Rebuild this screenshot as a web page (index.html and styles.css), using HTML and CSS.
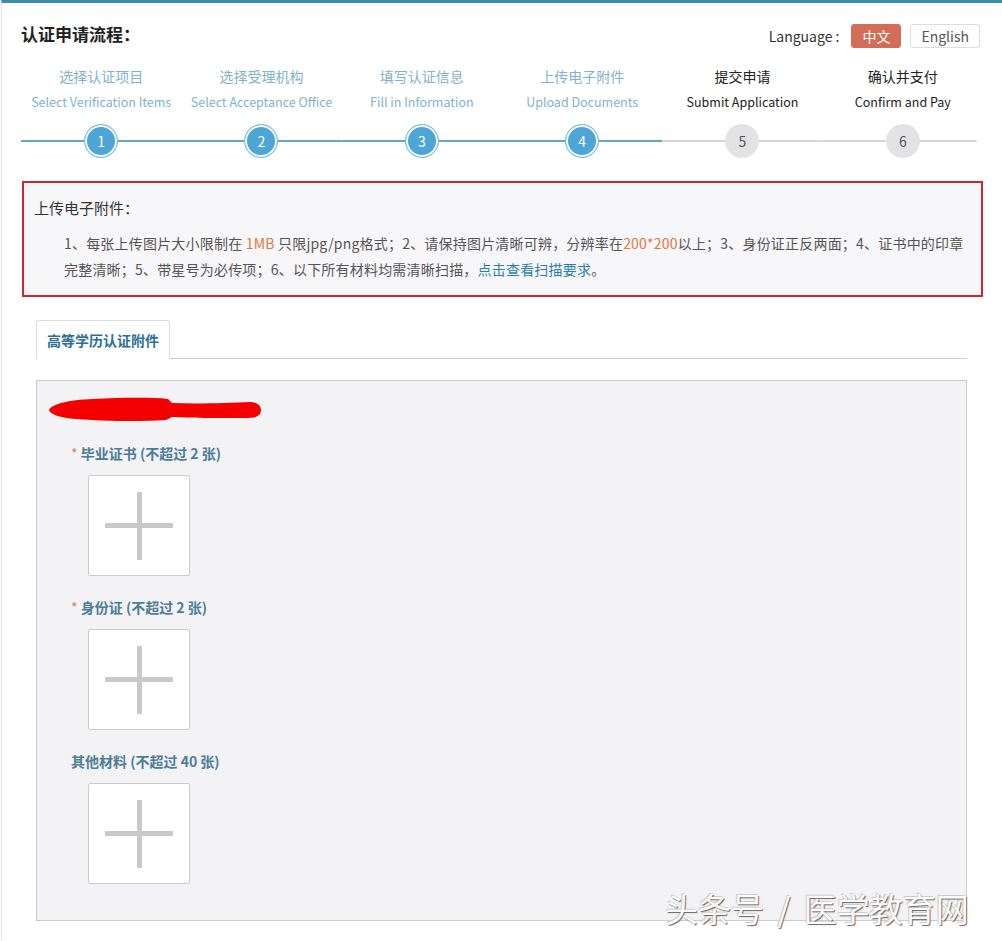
FILE: index.html
```html
<!DOCTYPE html>
<html lang="zh-CN">
<head>
    <meta charset="UTF-8">
    <title>认证申请流程</title>
    <link rel="stylesheet" href="styles.css">
</head>
<body>
<div class="page">
    <div class="header">
        <h1>认证申请流程：</h1>
        <div class="lang">
            <span class="lang-label">Language :</span>
            <span class="lang-btn active">中文</span>
            <span class="lang-btn">English</span>
        </div>
    </div>

    <div class="steps">
        <div class="step done">
            <div class="step-cn">选择认证项目</div>
            <div class="step-en">Select Verification Items</div>
            <div class="step-track"><span class="step-num">1</span></div>
        </div>
        <div class="step done">
            <div class="step-cn">选择受理机构</div>
            <div class="step-en">Select Acceptance Office</div>
            <div class="step-track"><span class="step-num">2</span></div>
        </div>
        <div class="step done">
            <div class="step-cn">填写认证信息</div>
            <div class="step-en">Fill in Information</div>
            <div class="step-track"><span class="step-num">3</span></div>
        </div>
        <div class="step done">
            <div class="step-cn">上传电子附件</div>
            <div class="step-en">Upload Documents</div>
            <div class="step-track"><span class="step-num">4</span></div>
        </div>
        <div class="step">
            <div class="step-cn">提交申请</div>
            <div class="step-en">Submit Application</div>
            <div class="step-track"><span class="step-num">5</span></div>
        </div>
        <div class="step">
            <div class="step-cn">确认并支付</div>
            <div class="step-en">Confirm and Pay</div>
            <div class="step-track"><span class="step-num">6</span></div>
        </div>
    </div>

    <div class="notice">
        <div class="notice-title">上传电子附件：</div>
        <p class="notice-text">1、每张上传图片大小限制在 <em>1MB</em> 只限jpg/png格式；2、请保持图片清晰可辨，分辨率在<em>200*200</em>以上；3、身份证正反两面；4、证书中的印章完整清晰；5、带星号为必传项；6、以下所有材料均需清晰扫描，<a href="#">点击查看扫描要求</a>。</p>
    </div>

    <div class="tabs">
        <div class="tab">高等学历认证附件</div>
    </div>

    <div class="panel">
        <svg class="scribble" width="214" height="26" viewBox="0 0 214 26">
            <path d="M1,13 C4,7 20,3 45,2 C70,1 100,0 120,2 L124,6 C150,7 180,6 203,5 C210,6 213,9 213,13 C213,18 209,21 200,21 C170,21 140,21 124,20 L118,23 C90,25 55,24 28,22 C12,21 2,17 1,13 Z" fill="#f40000"/>
        </svg>

        <div class="field">
            <div class="field-label"><span class="req">*</span> 毕业证书 (不超过 2 张)</div>
            <div class="upload"></div>
        </div>
        <div class="field">
            <div class="field-label"><span class="req">*</span> 身份证 (不超过 2 张)</div>
            <div class="upload"></div>
        </div>
        <div class="field">
            <div class="field-label">其他材料 (不超过 40 张)</div>
            <div class="upload"></div>
        </div>
    </div>

    <div class="watermark">头条号 / 医学教育网</div>
</div>
</body>
</html>
```

FILE: styles.css
```css
body {
    margin: 0;
    background-color: #fff;
    font-family: "Noto Sans CJK SC", "Noto Sans", sans-serif;
    color: #333;
}
.page {
    position: relative;
    margin-left: 1px;
    border-top: 3px solid #3a8ea8;
    border-left: 1px solid #e2e2e2;
    padding: 0 19px 19px 20px;
    min-height: 935px;
    box-sizing: border-box;
}
.header {
    display: flex;
    justify-content: space-between;
    align-items: center;
    padding-top: 20px;
    padding-right: 3px;
}
h1 {
    margin: 0 0 3px -1px;
    font-size: 17px;
    font-weight: bold;
    color: #222;
    line-height: 22px;
}
.lang {
    display: flex;
    align-items: center;
    font-size: 14px;
}
.lang-label {
    margin-right: 12px;
    color: #333;
}
.lang-btn {
    display: inline-block;
    height: 22px;
    line-height: 22px;
    padding: 0 10px;
    border: 1px solid #ddd;
    border-radius: 3px;
    color: #555;
    margin-left: 9px;
}
.lang-btn.active {
    background-color: #d46d58;
    border-color: #d46d58;
    color: #fff;
    padding: 0 10px;
    margin-left: 0;
}

/* steps */
.steps {
    display: flex;
    margin: 18px 0 0 -1px;
    width: 962px;
}
.step {
    flex: 1;
    display: flex;
    flex-direction: column;
    align-items: center;
    color: #222;
}
.step-cn {
    font-size: 14px;
    line-height: 20px;
}
.step-en {
    font-size: 12.5px;
    line-height: 20px;
    margin-top: 6px;
}
.step.done .step-cn,
.step.done .step-en {
    color: #7fb3ca;
}
.step-track {
    align-self: stretch;
    display: flex;
    justify-content: center;
    margin-top: 12px;
    background: linear-gradient(#d6d6d9, #d6d6d9) center / 100% 2px no-repeat;
}
.step:last-child .step-track {
    background-size: 96% 2px;
    background-position: left center;
}
.step.done .step-track {
    background-image: linear-gradient(#62a9bd, #62a9bd);
}
.step-num {
    width: 34px;
    height: 34px;
    border-radius: 50%;
    background-color: #e3e3e6;
    color: #555;
    font-size: 14px;
    line-height: 34px;
    text-align: center;
}
.step.done .step-num {
    width: 32px;
    height: 32px;
    line-height: 32px;
    background-color: #4da6d6;
    border: 1px solid #79c3d6;
    box-shadow: inset 0 0 0 2px #fff;
    color: #fff;
}

/* notice */
.notice {
    margin-top: 23px;
    border: 2px solid #d0262b;
    background-color: #f7f6f9;
    padding: 15px 10px 13px 10px;
}
.notice-title {
    font-size: 15px;
    line-height: 20px;
    color: #333;
}
.notice-text {
    margin: 12px 0 0 30px;
    font-size: 14px;
    line-height: 26px;
    letter-spacing: 0.2px;
    color: #555;
}
.notice-text em {
    font-style: normal;
    color: #e07a3e;
}
.notice-text a {
    color: #2b7fae;
    text-decoration: none;
}

/* tabs */
.tabs {
    margin: 23px 16px 0 14px;
    border-bottom: 1px solid #ccc;
    display: flex;
}
.tab {
    width: 132px;
    height: 38px;
    line-height: 38px;
    text-align: center;
    border: 1px solid #ddd;
    border-bottom: none;
    border-radius: 3px 3px 0 0;
    background-color: #fff;
    margin-bottom: -1px;
    font-size: 14px;
    font-weight: bold;
    color: #2c6f92;
}

/* upload panel */
.panel {
    margin: 21px 16px 0 14px;
    height: 541px;
    box-sizing: border-box;
    border: 1px solid #ccc;
    background-color: #f3f2f5;
    padding: 16px 0 0 11px;
}
.scribble {
    display: block;
}
.field {
    margin: 0 0 21px 23px;
}
.scribble + .field {
    margin-top: 20px;
}
.field-label {
    font-size: 14px;
    line-height: 20px;
    font-weight: bold;
    color: #4b7c98;
}
.req {
    color: #e27575;
    font-weight: normal;
}
.upload {
    width: 100px;
    height: 99px;
    margin: 12px 0 0 17px;
    border: 1px solid #ccc;
    border-radius: 2px;
    background-color: #fff;
    display: grid;
    place-items: center;
}
.upload::before,
.upload::after {
    content: "";
    grid-area: 1 / 1;
    background-color: #c9c9c9;
    border-radius: 1px;
}
.upload::before {
    width: 68px;
    height: 5px;
}
.upload::after {
    width: 5px;
    height: 68px;
}

.watermark {
    position: absolute;
    left: 663px;
    top: 883px;
    font-size: 33px;
    line-height: 44px;
    word-spacing: 6px;
    color: #fbfbfb;
    text-shadow: 1px 1px 1px #666, -1px -1px 0 #ccc;
    white-space: nowrap;
}
```
